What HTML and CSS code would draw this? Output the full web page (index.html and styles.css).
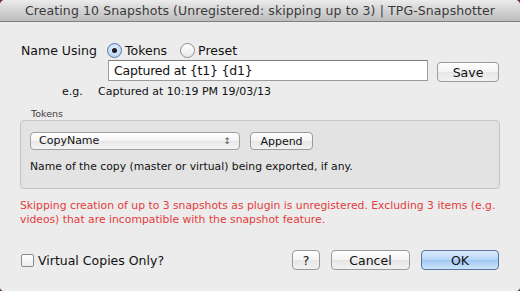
FILE: index.html
```html
<!DOCTYPE html>
<html lang="en">
<head>
  <meta charset="UTF-8" />
  <title>TPG-Snapshotter</title>
  <link rel="stylesheet" href="styles.css">
</head>
<body>
  <div class="window">
    <div class="titlebar">Creating 10 Snapshots (Unregistered: skipping up to 3) | TPG-Snapshotter</div>

    <div class="content">
      <div class="row name-row">
        <span class="label">Name Using</span>
        <label class="radio-item"><span class="radio checked"></span>Tokens</label>
        <label class="radio-item preset"><span class="radio"></span>Preset</label>
      </div>

      <div class="row input-row">
        <div class="text-input">Captured at {t1} {d1}</div>
        <button class="btn save">Save</button>
      </div>

      <div class="row example-row">
        <span class="eg">e.g.</span>
        <span class="example">Captured at 10:19 PM 19/03/13</span>
      </div>

      <div class="group-title">Tokens</div>
      <div class="group">
        <div class="row">
          <div class="popup">CopyName<span class="arrows">&#8597;</span></div>
          <button class="btn small">Append</button>
        </div>
        <div class="description">Name of the copy (master or virtual) being exported, if any.</div>
      </div>

      <div class="warning">Skipping creation of up to 3 snapshots as plugin is unregistered. Excluding 3 items (e.g.<br>videos) that are incompatible with the snapshot feature.</div>

      <div class="row footer">
        <label class="check-item"><span class="checkbox"></span>Virtual Copies Only?</label>
        <div class="buttons">
          <button class="btn help">?</button>
          <button class="btn cancel">Cancel</button>
          <button class="btn ok">OK</button>
        </div>
      </div>
    </div>
  </div>
</body>
</html>
```

FILE: styles.css
```css
* {
  box-sizing: border-box;
}

body {
  margin: 0;
  background: #6b2a2a;
  font-family: 'DejaVu Sans', 'Liberation Sans', sans-serif;
  color: #111;
}

.window {
  width: 520px;
  height: 291px;
  background: #ececec;
  border-radius: 5px 5px 4px 4px;
  overflow: hidden;
}

.titlebar {
  height: 22px;
  background: linear-gradient(#ececec, #d3d3d3 50%, #bdbdbd);
  border-bottom: 1px solid #7f7f7f;
  text-align: center;
  font-size: 12.5px;
  line-height: 22px;
  color: #3a3a3a;
  letter-spacing: 0.1px;
}

.content {
  padding: 0 21px 0 20px;
}

.row {
  display: flex;
  align-items: center;
}

/* name using */
.name-row {
  height: 17px;
  margin-top: 20px;
  font-size: 12.5px;
}

.label {
  width: 87px;
  padding-left: 1px;
}

.radio-item {
  display: flex;
  align-items: center;
}

.radio-item.preset {
  margin-left: 13px;
}

.radio {
  width: 15px;
  height: 15px;
  border-radius: 50%;
  border: 1px solid #8d8d8d;
  background: linear-gradient(#ffffff, #e9e9e9);
  margin-right: 3px;
  position: relative;
}

.radio.checked {
  border-color: #5576a8;
  background: radial-gradient(circle at 50% 40%, #eaf3fd, #a9cbef);
}

.radio.checked::after {
  content: "";
  position: absolute;
  left: 4px;
  top: 4px;
  width: 5px;
  height: 5px;
  border-radius: 50%;
  background: #1d1d1d;
}

/* text field */
.input-row {
  margin-top: 1px;
  height: 23px;
  align-items: flex-start;
}

.text-input {
  margin-left: 88px;
  width: 320px;
  height: 21px;
  background: #fff;
  border: 1px solid #9c9c9c;
  border-top-color: #7c7c7c;
  font-size: 12.5px;
  letter-spacing: -0.2px;
  line-height: 19px;
  padding-left: 5px;
}

.btn {
  font-family: inherit;
  font-size: 12.5px;
  color: #111;
  height: 20px;
  padding: 0;
  border: 1px solid #9a9a9a;
  border-radius: 4px;
  background: linear-gradient(#ffffff, #f3f3f3 50%, #e6e6e6 51%, #f2f2f2);
}

.btn.save {
  margin-left: 9px;
  margin-top: 2px;
  width: 62px;
}

.example-row {
  margin-top: 1px;
  height: 14px;
  font-size: 11px;
}

.eg {
  margin-left: 42px;
  width: 36px;
}

/* tokens group */
.group-title {
  margin-top: 9px;
  margin-left: 11px;
  font-size: 9.5px;
  color: #3d3d3d;
  height: 13px;
  line-height: 13px;
}

.group {
  width: 480px;
  height: 69px;
  background: #e3e3e3;
  border: 1px solid #c6c6c6;
  border-radius: 4px;
  padding: 11px 9px 0;
}

.popup {
  width: 210px;
  height: 18px;
  border: 1px solid #a0a0a0;
  border-radius: 4px;
  background: linear-gradient(#ffffff, #f4f4f4 50%, #e8e8e8 51%, #f4f4f4);
  font-size: 11px;
  line-height: 16px;
  padding-left: 8px;
  display: flex;
  justify-content: space-between;
}

.arrows {
  font-size: 9px;
  color: #555;
  padding-right: 8px;
}

.btn.small {
  margin-left: 10px;
  width: 63px;
  height: 18px;
  font-size: 11px;
}

.description {
  margin-top: 10px;
  font-size: 10.8px;
}

.warning {
  margin-top: 10px;
  font-size: 10.8px;
  line-height: 14px;
  color: #e33c3c;
  white-space: nowrap;
}

/* footer */
.footer {
  margin-top: 23px;
  justify-content: space-between;
}

.check-item {
  display: flex;
  align-items: center;
  font-size: 12.5px;
  margin-left: 1px;
}

.checkbox {
  width: 13px;
  height: 13px;
  border: 1px solid #8a8a8a;
  border-radius: 2px;
  background: linear-gradient(#ffffff, #ececec);
  margin-right: 4px;
}

.buttons {
  display: flex;
  gap: 10px;
}

.btn.help {
  width: 28px;
  margin-right: 1px;
}

.btn.cancel {
  width: 79px;
}

.btn.ok {
  width: 78px;
  margin-left: 1px;
  border-color: #58739f;
  background: linear-gradient(#dbeafb, #b5d5f6 50%, #9fc8f2 51%, #cfe6fb);
}
```
